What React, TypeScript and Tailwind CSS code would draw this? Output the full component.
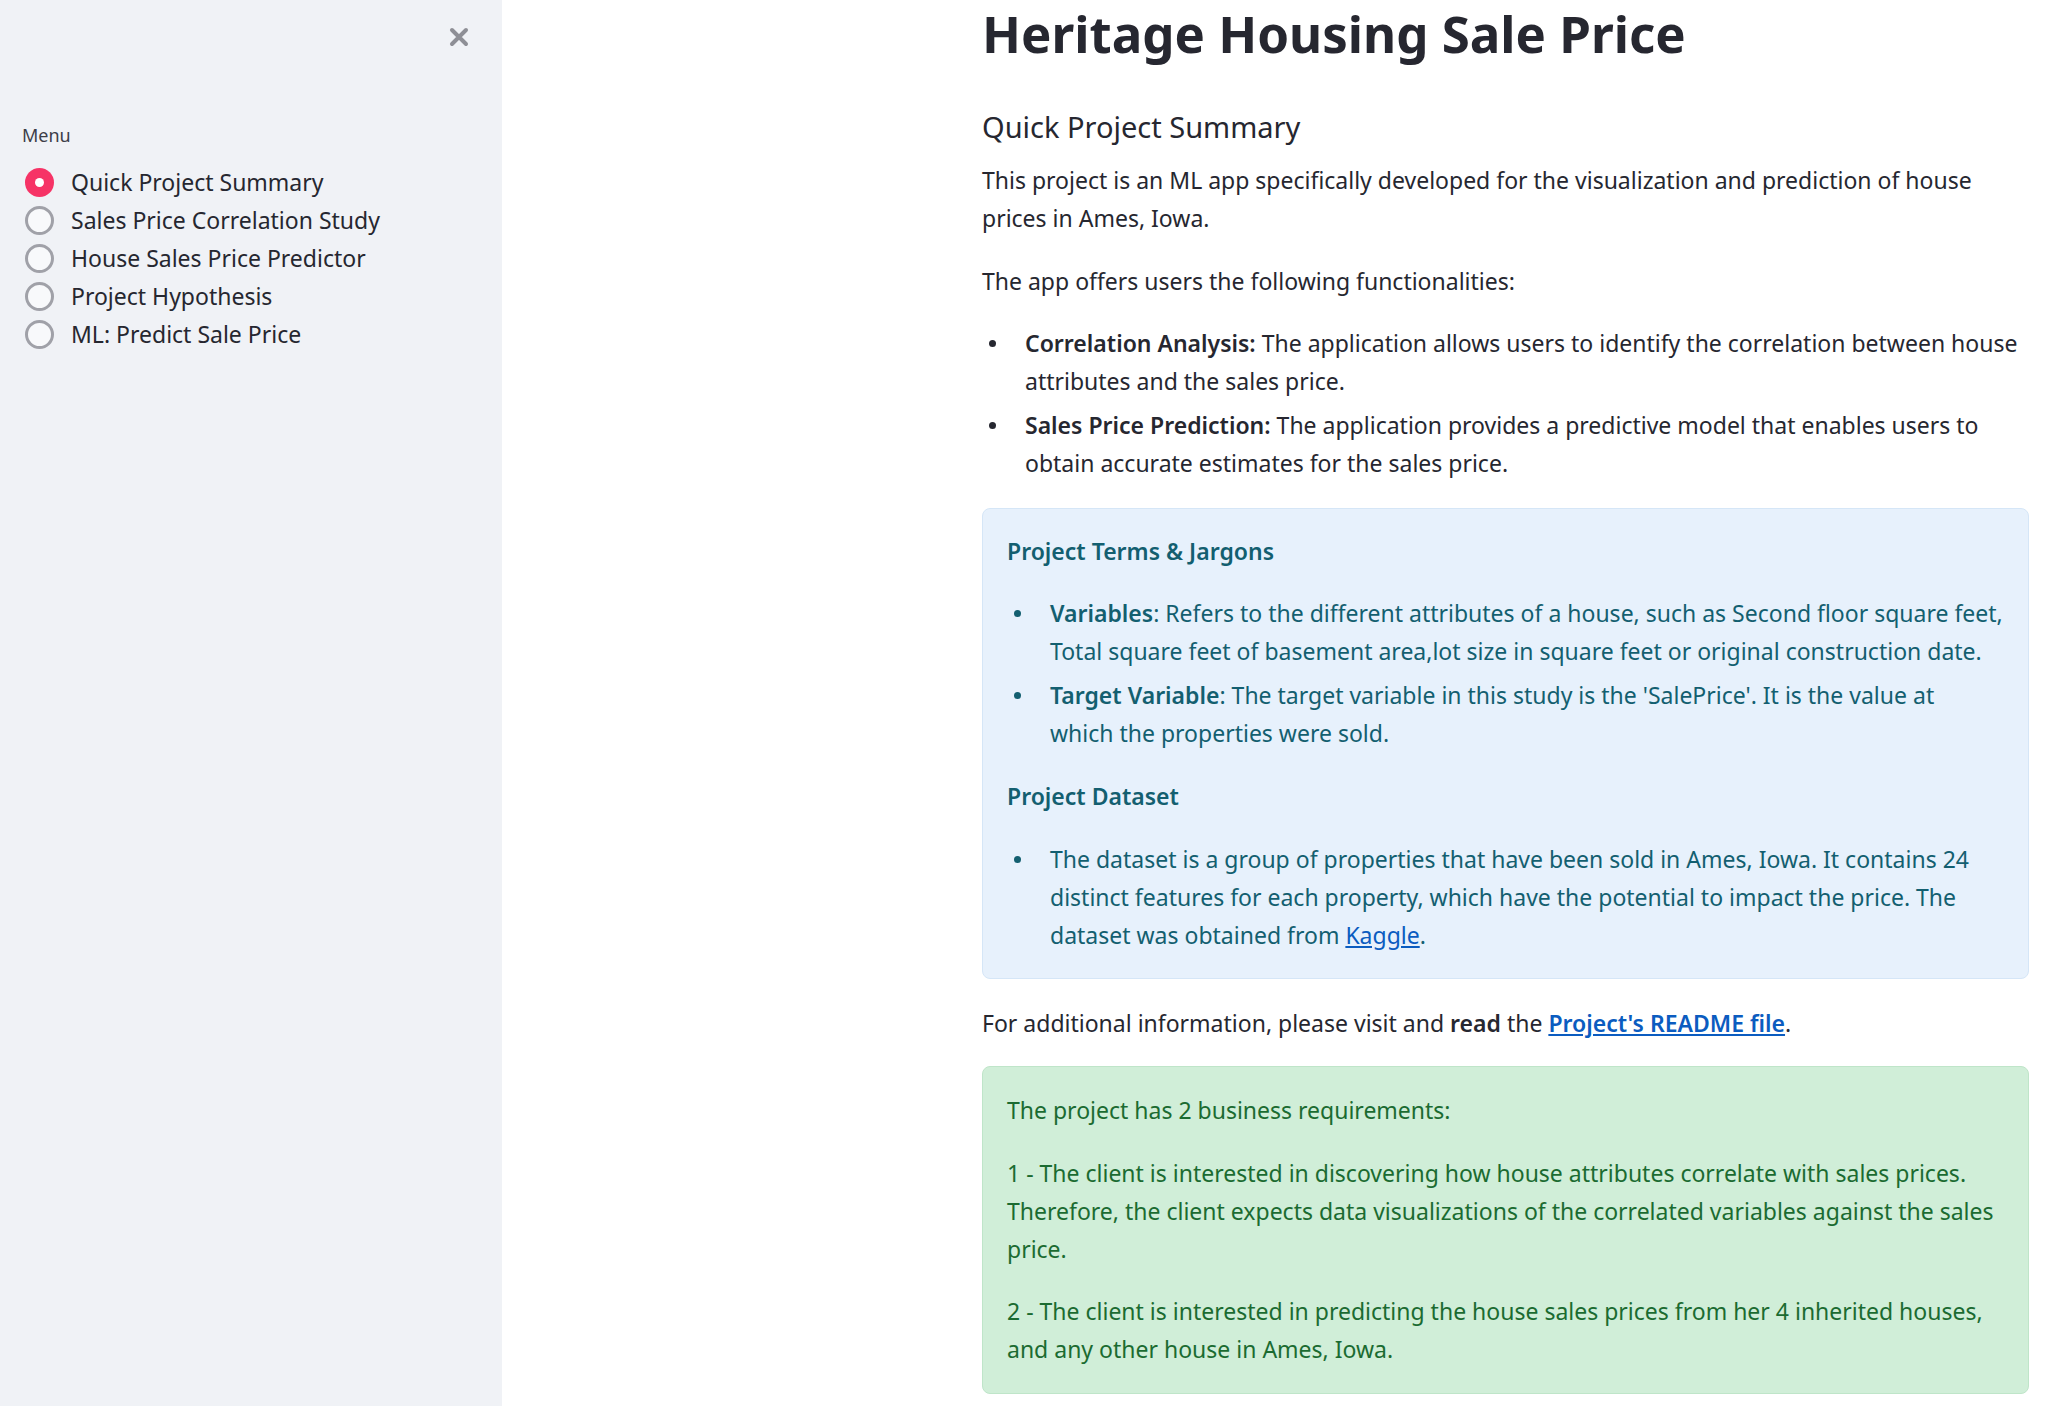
import { useState } from "react";

const menuItems = [
  "Quick Project Summary",
  "Sales Price Correlation Study",
  "House Sales Price Predictor",
  "Project Hypothesis",
  "ML: Predict Sale Price",
];

const Sidebar = () => {
  const [selected, setSelected] = useState(0);

  return (
    <aside className="w-[502px] shrink-0 bg-[#f0f2f6] text-[#262730]">
      <div className="flex justify-end pt-[27px] pr-[33px]">
        <svg width="20" height="20" viewBox="0 0 20 20" className="text-[#8e8f96]">
          <path d="M3 3 L17 17 M17 3 L3 17" stroke="currentColor" strokeWidth="4" strokeLinecap="round" />
        </svg>
      </div>
      <div className="pl-[22px] pt-[76px]">
        <div className="text-[18px] leading-[24px] text-[#3d3e48]">Menu</div>
        <div className="mt-[16px] flex flex-col">
          {menuItems.map((item, i) => (
            <label
              key={item}
              className="flex h-[38px] cursor-pointer items-center"
              onClick={() => setSelected(i)}
            >
              <span
                className={
                  i === selected
                    ? "ml-[3px] flex h-[29px] w-[29px] items-center justify-center rounded-full bg-[#f63366]"
                    : "ml-[3px] h-[29px] w-[29px] rounded-full border-[3px] border-[#a0a1a8] bg-[#f8f9fb]"
                }
              >
                {i === selected && <span className="h-[9px] w-[9px] rounded-full bg-white" />}
              </span>
              <span className="ml-[17px] text-[23px]">{item}</span>
            </label>
          ))}
        </div>
      </div>
    </aside>
  );
};

const Bullet = ({ children, className }: { children: React.ReactNode; className?: string }) => (
  <li className={"flex " + (className ?? "")}>
    <span className="flex h-[38px] w-[43px] shrink-0 items-center pl-[7px]">
      <span className="h-[7px] w-[7px] rounded-full bg-current" />
    </span>
    <span>{children}</span>
  </li>
);

const App = () => {
  return (
    <div
      className="flex h-[1406px] overflow-hidden"
      style={{ fontFamily: '"Noto Sans", "Open Sans", sans-serif' }}
    >
      <Sidebar />
      <main className="flex-1 bg-white pl-[480px] pr-[17px] text-[23px] leading-[38px] text-[#262730]">
        <h1 className="text-[51px] font-bold leading-[66px] text-[#262730]">Heritage Housing Sale Price</h1>
        <h3 className="mt-[41px] text-[29px] leading-[40px]">Quick Project Summary</h3>
        <p className="mt-[14px]">
          This project is an ML app specifically developed for the visualization and prediction of house prices in
          Ames, Iowa.
        </p>
        <p className="mt-[25px]">The app offers users the following functionalities:</p>
        <ul className="mt-[24px]">
          <Bullet>
            <span className="font-semibold">Correlation Analysis:</span> The application allows users to identify the
            correlation between house attributes and the sales price.
          </Bullet>
          <Bullet className="mt-[6px]">
            <span className="font-semibold">Sales Price Prediction:</span> The application provides a predictive model
            that enables users to obtain accurate estimates for the sales price.
          </Bullet>
        </ul>

        <div className="mt-[26px] rounded-lg border border-[#d5e6f7] bg-[#e7f1fc] px-[24px] pt-[23px] pb-[24px] text-[#135f70]">
          <div className="font-semibold">Project Terms &amp; Jargons</div>
          <ul className="mt-[24px]">
            <Bullet>
              <span className="font-semibold">Variables</span>: Refers to the different attributes of a house, such
              as Second floor square feet, Total square feet of basement area,lot size in square feet or original
              construction date.
            </Bullet>
            <Bullet className="mt-[6px]">
              <span className="font-semibold">Target Variable</span>: The target variable in this study is the
              'SalePrice'. It is the value at
              <br />
              which the properties were sold.
            </Bullet>
          </ul>
          <div className="mt-[25px] font-semibold">Project Dataset</div>
          <ul className="mt-[25px]">
            <Bullet>
              The dataset is a group of properties that have been sold in Ames, Iowa. It contains 24 distinct features
              for each property, which have the potential to impact the price. The dataset was obtained from{" "}
              <a href="#" className="text-[#0b5cc0] underline">
                Kaggle
              </a>
              .
            </Bullet>
          </ul>
        </div>

        <p className="mt-[25px]">
          For additional information, please visit and <span className="font-semibold">read</span> the{" "}
          <a href="#" className="font-semibold text-[#0b5cc0] underline">
            Project's README file
          </a>
          .
        </p>

        <div className="mt-[24px] rounded-lg border border-[#bfe5c9] bg-[#d0eed8] px-[24px] pt-[24px] pb-[25px] text-[#1b6b31]">
          <p>The project has 2 business requirements:</p>
          <p className="mt-[25px]">
            1 - The client is interested in discovering how house attributes correlate with sales prices. Therefore,
            the client expects data visualizations of the correlated variables against the sales price.
          </p>
          <p className="mt-[24px]">
            2 - The client is interested in predicting the house sales prices from her 4 inherited houses, and any
            other house in Ames, Iowa.
          </p>
        </div>
      </main>
    </div>
  );
};

export default App;
